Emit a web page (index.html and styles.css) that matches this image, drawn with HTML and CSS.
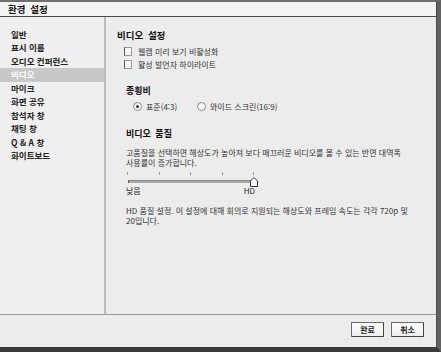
FILE: index.html
```html
<!DOCTYPE html>
<html lang="ko">
<head>
<meta charset="utf-8">
<title>환경 설정</title>
<link rel="stylesheet" href="styles.css">
</head>
<body>
<div class="window">
  <div class="titlebar">환경 설정</div>
  <div class="main">
    <ul class="sidebar">
      <li>일반</li>
      <li>표시 이름</li>
      <li>오디오 컨퍼런스</li>
      <li class="active">비디오</li>
      <li>마이크</li>
      <li>화면 공유</li>
      <li>참석자 창</li>
      <li>채팅 창</li>
      <li>Q &amp; A 창</li>
      <li>화이트보드</li>
    </ul>
    <div class="content">
      <h1 class="title">비디오 설정</h1>
      <div class="checks">
        <div class="check"><span class="box"></span>웹캠 미리 보기 비활성화</div>
        <div class="check"><span class="box"></span>활성 발언자 하이라이트</div>
      </div>
      <div class="section aspect">
        <h2 class="subtitle">종횡비</h2>
        <div class="radios">
          <div class="radio first"><span class="dot on"></span>표준(4:3)</div>
          <div class="radio"><span class="dot"></span>와이드 스크린(16:9)</div>
        </div>
      </div>
      <div class="section quality">
        <h2 class="subtitle">비디오 품질</h2>
        <p class="para">고품질을 선택하면 해상도가 높아져 보다 매끄러운 비디오를 볼 수 있는 반면 대역폭<br>사용률이 증가합니다.</p>
        <div class="slider">
          <div class="ticks"><span></span><span></span><span></span><span></span><span></span></div>
          <div class="track"></div>
          <svg class="thumb" width="8" height="10" viewBox="0 0 8 10"><polygon points="0.5,9.5 0.5,4 4,0.5 7.5,4 7.5,9.5" fill="#ffffff" stroke="#333333" stroke-width="1"/></svg>
        </div>
        <div class="labels"><span>낮음</span><span>HD</span></div>
        <p class="para note">HD 품질 설정. 이 설정에 대해 회의로 지원되는 해상도와 프레임 속도는 각각 720p 및<br>20입니다.</p>
      </div>
    </div>
  </div>
  <div class="footer">
    <button class="btn">완료</button>
    <button class="btn">취소</button>
  </div>
</div>
</body>
</html>
```
FILE: styles.css
```css
html, body {
  margin: 0;
  padding: 0;
  background: #6b6b6b;
}
body {
  font-family: "Noto Sans CJK KR", "Noto Sans", "Liberation Sans", sans-serif;
  color: #2a2a2a;
}
.window {
  width: 441px;
  height: 352px;
  box-sizing: border-box;
  border-top: 2px solid #6e6e6e;
  border-right: 4px solid #626262;
  border-bottom: 5px solid #3a3a3a;
  background: #ececec;
  display: flex;
  flex-direction: column;
  overflow: hidden;
}
.titlebar {
  height: 14px;
  line-height: 14px;
  flex: none;
  background: #f4f4f4;
  border-bottom: 1px solid #4a4a4a;
  border-right: 1px solid #444;
  padding-left: 8px;
  font-size: 9.5px;
  font-weight: bold;
  word-spacing: 2px;
  color: #111;
}
.main {
  flex: 1;
  display: flex;
  min-height: 0;
  border-right: 1px solid #4a4a4a;
}
.sidebar {
  list-style: none;
  margin: 0;
  padding: 11px 0 0 0;
  width: 104px;
  flex: none;
  background: #efefef;
  border-right: 2px solid #bcbcbc;
}
.sidebar li {
  height: 13.45px;
  line-height: 13.45px;
  padding-left: 11px;
  font-size: 8.5px;
  font-weight: bold;
  color: #222;
  white-space: nowrap;
}
.sidebar li.active {
  background: #c8c8c8;
  color: #ffffff;
}
.content {
  flex: 1;
  padding: 12px 0 0 11px;
  font-size: 8px;
  color: #333;
}
.title {
  margin: 0;
  font-size: 9.5px;
  line-height: 12px;
  height: 12px;
  font-weight: bold;
  word-spacing: 2px;
  color: #111;
}
.checks {
  margin: 3.5px 0 0 7px;
}
.check {
  height: 13px;
  display: flex;
  align-items: center;
  white-space: nowrap;
}
.box {
  width: 6px;
  height: 7px;
  border: 1px solid #9a9a9a;
  border-left-color: #555;
  background: #f7f7f7;
  margin-right: 6px;
  flex: none;
}
.section {
  margin-left: 9px;
}
.aspect {
  margin-top: 14.5px;
}
.subtitle {
  margin: 0;
  font-size: 9px;
  line-height: 12px;
  height: 12px;
  font-weight: bold;
  word-spacing: 2px;
  color: #111;
}
.radios {
  display: flex;
  margin: 3px 0 0 7px;
  height: 12px;
  align-items: center;
}
.radio {
  display: flex;
  align-items: center;
  white-space: nowrap;
}
.radio.first {
  width: 64px;
}
.dot {
  width: 7px;
  height: 7px;
  border: 1px solid #8a8a8a;
  border-radius: 50%;
  background: #fafafa;
  margin-right: 4px;
  display: flex;
  align-items: center;
  justify-content: center;
  flex: none;
}
.dot.on::after {
  content: "";
  width: 3px;
  height: 3px;
  border-radius: 50%;
  background: #333;
}
.quality {
  margin-top: 16px;
}
.para {
  margin: 7.75px 0 0 0;
  line-height: 10.5px;
  white-space: nowrap;
  color: #333;
}
.slider {
  position: relative;
  margin: 3.25px 0 0 1px;
  width: 127px;
  height: 14px;
}
.ticks {
  display: flex;
  justify-content: space-between;
  height: 4px;
  margin-top: 1px;
}
.ticks span {
  width: 1px;
  height: 3px;
  background: #9a9a9a;
}
.track {
  margin: 4px 0 0 1px;
  width: 125px;
  height: 2px;
  background: #a8a8a8;
  border-top: 1px solid #8a8a8a;
  border-left: 1px solid #555;
}
.thumb {
  position: absolute;
  left: 123px;
  top: 5px;
}
.labels {
  display: flex;
  justify-content: space-between;
  width: 129px;
  line-height: 10px;
  height: 10px;
  color: #222;
}
.note {
  margin-top: 9.7px;
  line-height: 10px;
}
.footer {
  flex: none;
  border-top: 1px solid #9a9a9a;
  border-right: 1px solid #4a4a4a;
  display: flex;
  justify-content: flex-end;
  align-items: flex-start;
  gap: 7px;
  padding: 7px 12px 0 0;
  box-sizing: border-box;
  background: #ececec;
  height: 33px;
}
.btn {
  width: 33px;
  height: 15px;
  padding: 0;
  margin: 0;
  font-family: "Noto Sans CJK KR", "Noto Sans", sans-serif;
  font-size: 8px;
  font-weight: bold;
  color: #222;
  background: linear-gradient(#fdfdfd, #eeeeee);
  border: 1px solid #6a6a6a;
  border-right-color: #444;
  border-bottom-color: #444;
  border-radius: 1px;
  line-height: 13px;
}
```
